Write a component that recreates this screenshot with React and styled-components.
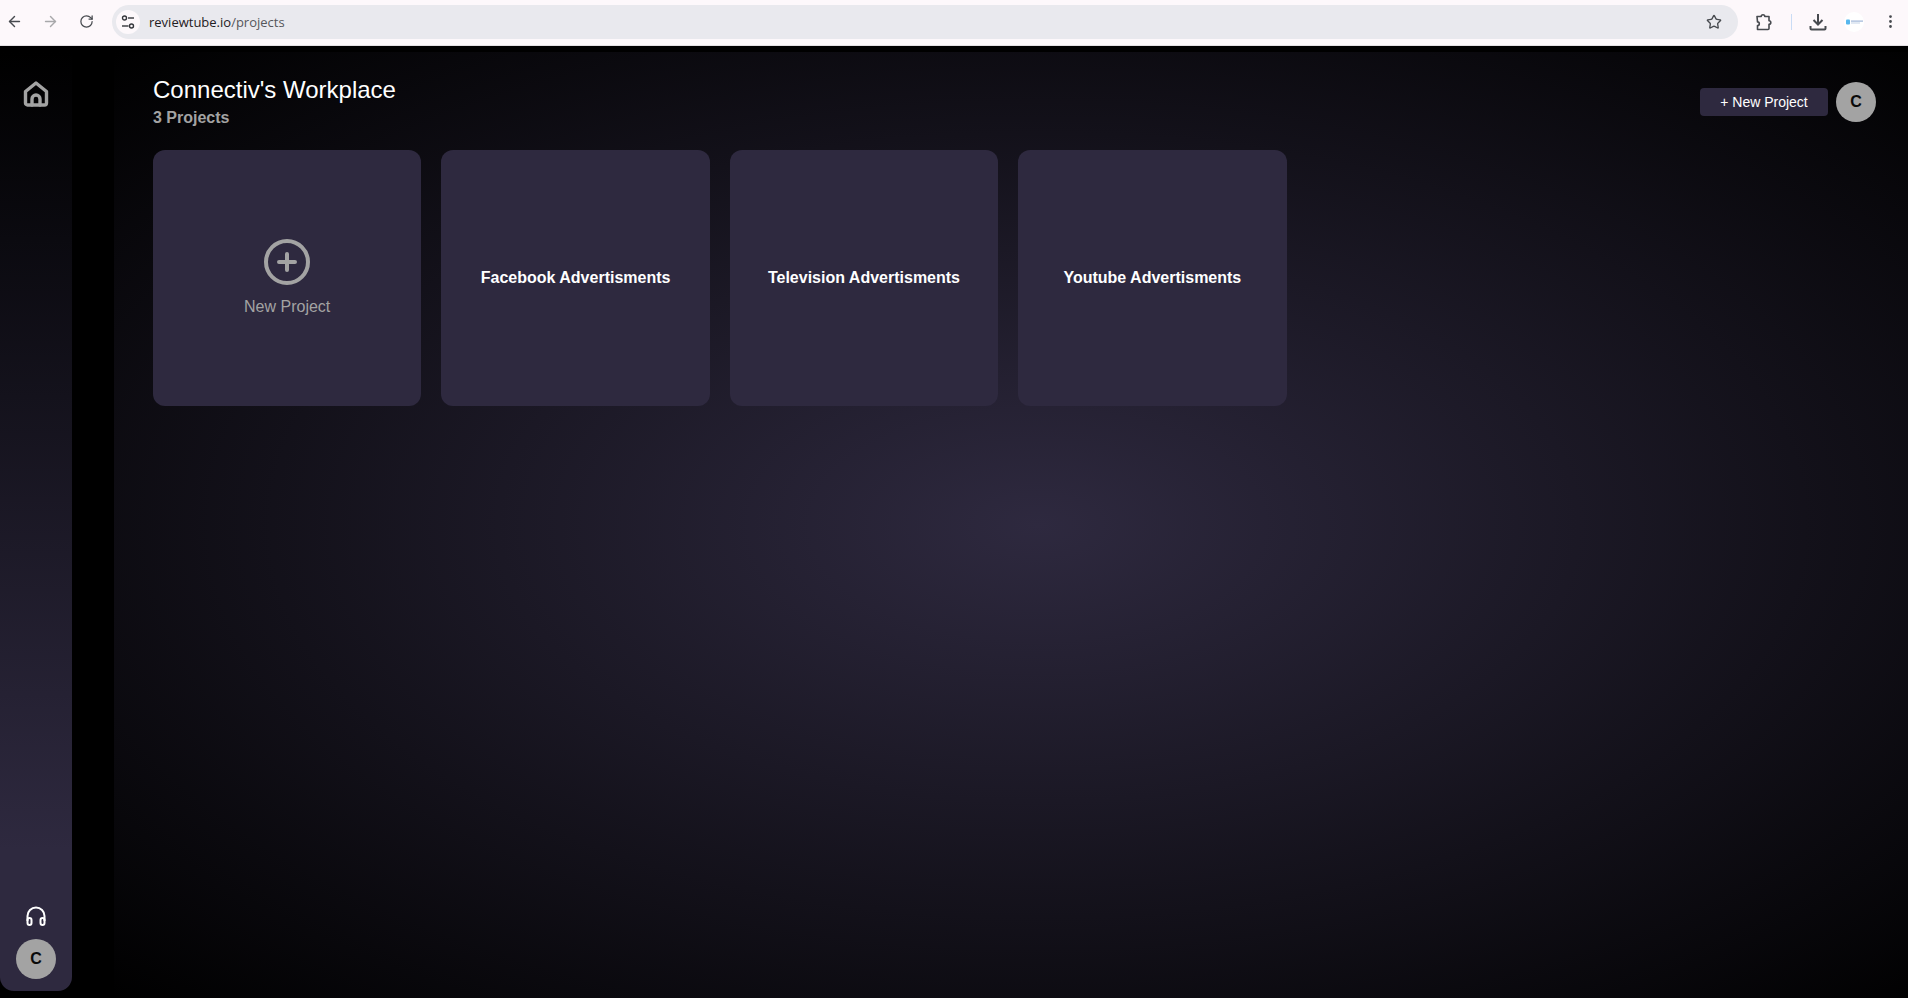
import React from "react";
import styled, { createGlobalStyle } from "styled-components";
import { ArrowLeft, ArrowRight, RotateCw, Star, EllipsisVertical } from "lucide-react";

const Global = createGlobalStyle`
  html, body { margin: 0; padding: 0; height: 100%; background: #000; overflow: hidden; }
  #root { height: 100%; }
  * { box-sizing: border-box; }
  body { font-family: "Liberation Sans", Arial, sans-serif; }
`;

const Page = styled.div`
  width: 1908px; height: 998px; display: flex; flex-direction: column; background: #000;
`;
const Chrome = styled.header`
  height: 46px; flex: none; background: #fdf8fb; display: flex; align-items: center;
  padding: 0 0 2px 2px; border-bottom: 1px solid #e4e1e4;
`;
const NavBtn = styled.span`
  width: 24px; height: 24px; flex: none; display: flex; align-items: center; justify-content: center;
  margin-right: ${p => p.$mr || 0}px; margin-left: ${p => p.$ml || 0}px; color: ${p => p.$dim ? "#a8a8aa" : "#474a4f"};
`;
const UrlBar = styled.div`
  width: 1626px; height: 34px; flex: none; border-radius: 17px; background: #e9e9ee; display: flex; align-items: center;
  padding: 0 16px 0 4px; margin-left: 14px;
`;
const SiteChip = styled.span`
  width: 24px; height: 24px; border-radius: 50%; background: #fdf8fb; display: flex; align-items: center; justify-content: center; margin-right: 9px;
`;
const Url = styled.span`
  font-family: "Open Sans", "Noto Sans", sans-serif; font-size: 13px; color: #1f2023; flex: 1;
`;
const UrlPath = styled.span`color: #55575b;`;
const Sep = styled.span`width: 1px; height: 16px; flex: none; background: #c9dcf5; margin: 0 14px 0 15px;`;
const ProfileDot = styled.span`
  width: 20px; height: 20px; flex: none; border-radius: 50%; background: #fff; margin-left: 14px; display: flex; align-items: center; justify-content: center;
`;

const Body = styled.div`
  flex: 1; min-height: 0; display: flex; padding: 6px 0 7px 0;
`;
const Side = styled.aside`
  width: 72px; flex: none; border-radius: 0 0 14px 14px; display: flex; flex-direction: column; align-items: center;
  padding: 27px 0 12px; background: linear-gradient(180deg, #000 0%, #0b0a10 20%, #2e293f 85%, #2e293f 100%);
`;
const HomeLink = styled.span`color: #a3a3a3; display: flex; height: 36px;`;
const Spacer = styled.div`flex: 1;`;
const HelpIcon = styled.span`color: #fff; display: flex; margin-bottom: 11px;`;
const Avatar = styled.div`
  width: 40px; height: 40px; border-radius: 50%; background: #a3a3a3; color: #0a0a0a; display: flex; align-items: center; justify-content: center;
  font-size: 16px; font-weight: 700; flex: none;
`;
const Main = styled.main`
  flex: 1; margin-left: 42px; margin-bottom: -7px; padding: 23px 32px 0 39px;
  background: radial-gradient(ellipse at 51.5% 50%, #2e293f 0%, #000 100%);
`;
const TopRow = styled.div`display: flex; align-items: flex-start; justify-content: space-between;`;
const Title = styled.h1`margin: 0; font-size: 24px; line-height: 30px; font-weight: 400; color: #fff;`;
const Count = styled.div`font-size: 16px; line-height: 20px; font-weight: 700; color: #a3a3a3; margin-top: 3px;`;
const Actions = styled.div`display: flex; align-items: center; gap: 8px; margin-top: 7px;`;
const NewBtn = styled.button`
  width: 128px; height: 28px; border: 0; border-radius: 4px; background: #2e293f; color: #fff; font: 400 14px "Liberation Sans", Arial, sans-serif; padding: 0;
`;
const Grid = styled.div`display: flex; gap: 20px; margin-top: 22px;`;
const Card = styled.div`
  width: 268.4px; height: 256px; border-radius: 12px; background: #2e293f; display: flex; flex-direction: column; align-items: center; justify-content: center;
  color: ${p => p.$muted ? "#a3a3a3" : "#fff"};
  padding-bottom: ${p => p.$muted ? 2 : 0}px;
`;
const CardTitle = styled.div`font-size: 16px; font-weight: 700; line-height: 20px;`;
const CardLabel = styled.div`font-size: 16px; line-height: 20px; margin-top: 11px;`;

const PlusIcon = () => (
  <svg width="48" height="48" viewBox="0 0 48 48" fill="none" stroke="currentColor" strokeWidth="4" strokeLinecap="round">
    <circle cx="24" cy="24" r="21" />
    <path d="M24 16v16M16 24h16" />
  </svg>
);
const TuneIcon = () => (
  <svg width="14" height="14" viewBox="0 0 14 14" fill="none" stroke="#33353a" strokeWidth="1.4">
    <circle cx="3.5" cy="3" r="2" /><path d="M7 3h6" /><circle cx="10.5" cy="11" r="2" /><path d="M1 11h6.5" />
  </svg>
);
const HomeIcon = () => (
  <svg width="30" height="30" viewBox="0 0 30 30" fill="none" stroke="currentColor" strokeWidth="3.4" strokeLinejoin="round" strokeLinecap="round">
    <path d="M4.500 12.500 15 4l10.500 8.500V24a2 2 0 0 1-2 2h-17a2 2 0 0 1-2-2z" />
    <path d="M11 26v-6a4 4 0 0 1 8 0v6" />
  </svg>
);
const HeadsetIcon = () => (
  <svg width="24" height="24" viewBox="0 0 24 24" fill="none" stroke="currentColor" strokeWidth="2" strokeLinejoin="round">
    <path d="M3.500 17v-5a8.500 8.500 0 0 1 17 0v5" />
    <rect x="3.500" y="14" width="4" height="7" rx="2" />
    <rect x="16.500" y="14" width="4" height="7" rx="2" />
  </svg>
);
const ExtensionIcon = () => (
  <svg width="18" height="18" viewBox="0 0 18 18" fill="none" stroke="#474a4f" strokeWidth="1.6" strokeLinejoin="round">
    <path d="M2 3.500h4.200a1.800 1.800 0 0 1 3.600 0H14v4.200a1.800 1.800 0 0 1 0 3.600V15.500a1 1 0 0 1-1 1H2.500v-4a1.800 1.800 0 0 0 0-3.600z" />
  </svg>
);
const DownloadIcon = () => (
  <svg width="20" height="20" viewBox="0 0 20 20" fill="none" stroke="#474a4f" strokeWidth="2">
    <path d="M10 2v10M5.500 8l4.500 4.500L14.500 8" />
    <path d="M2.500 14v2.500a1 1 0 0 0 1 1h13a1 1 0 0 0 1-1V14" />
  </svg>
);
const ProfileLogo = () => (
  <svg width="17" height="6" viewBox="0 0 17 6">
    <rect x="0" y="0.500" width="4" height="5" rx="1" fill="#57b7ee" />
    <rect x="5" y="1.500" width="12" height="1.200" fill="#9fb6d8" />
    <rect x="5" y="3.500" width="9" height="1" fill="#c4d3e8" />
  </svg>
);

const projects = ["Facebook Advertisments", "Television Advertisments", "Youtube Advertisments"];

export default function App() {
  return (
    <Page>
      <Global />
      <Chrome>
        <NavBtn $mr={12}><ArrowLeft size={17} /></NavBtn>
        <NavBtn $dim $mr={12}><ArrowRight size={17} /></NavBtn>
        <NavBtn><RotateCw size={15} /></NavBtn>
        <UrlBar>
          <SiteChip><TuneIcon /></SiteChip>
          <Url>reviewtube.io<UrlPath>/projects</UrlPath></Url>
          <Star size={16} color="#474a4f" />
        </UrlBar>
        <NavBtn $ml={14}><ExtensionIcon /></NavBtn>
        <Sep />
        <NavBtn><DownloadIcon /></NavBtn>
        <ProfileDot><ProfileLogo /></ProfileDot>
        <NavBtn $ml={14}><EllipsisVertical size={17} /></NavBtn>
      </Chrome>
      <Body>
        <Side>
          <HomeLink><HomeIcon /></HomeLink>
          <Spacer />
          <HelpIcon><HeadsetIcon /></HelpIcon>
          <Avatar>C</Avatar>
        </Side>
        <Main>
          <TopRow>
            <div>
              <Title>Connectiv's Workplace</Title>
              <Count>3 Projects</Count>
            </div>
            <Actions>
              <NewBtn>+ New Project</NewBtn>
              <Avatar>C</Avatar>
            </Actions>
          </TopRow>
          <Grid>
            <Card $muted>
              <PlusIcon />
              <CardLabel>New Project</CardLabel>
            </Card>
            {projects.map(p => <Card key={p}><CardTitle>{p}</CardTitle></Card>)}
          </Grid>
        </Main>
      </Body>
    </Page>
  );
}
